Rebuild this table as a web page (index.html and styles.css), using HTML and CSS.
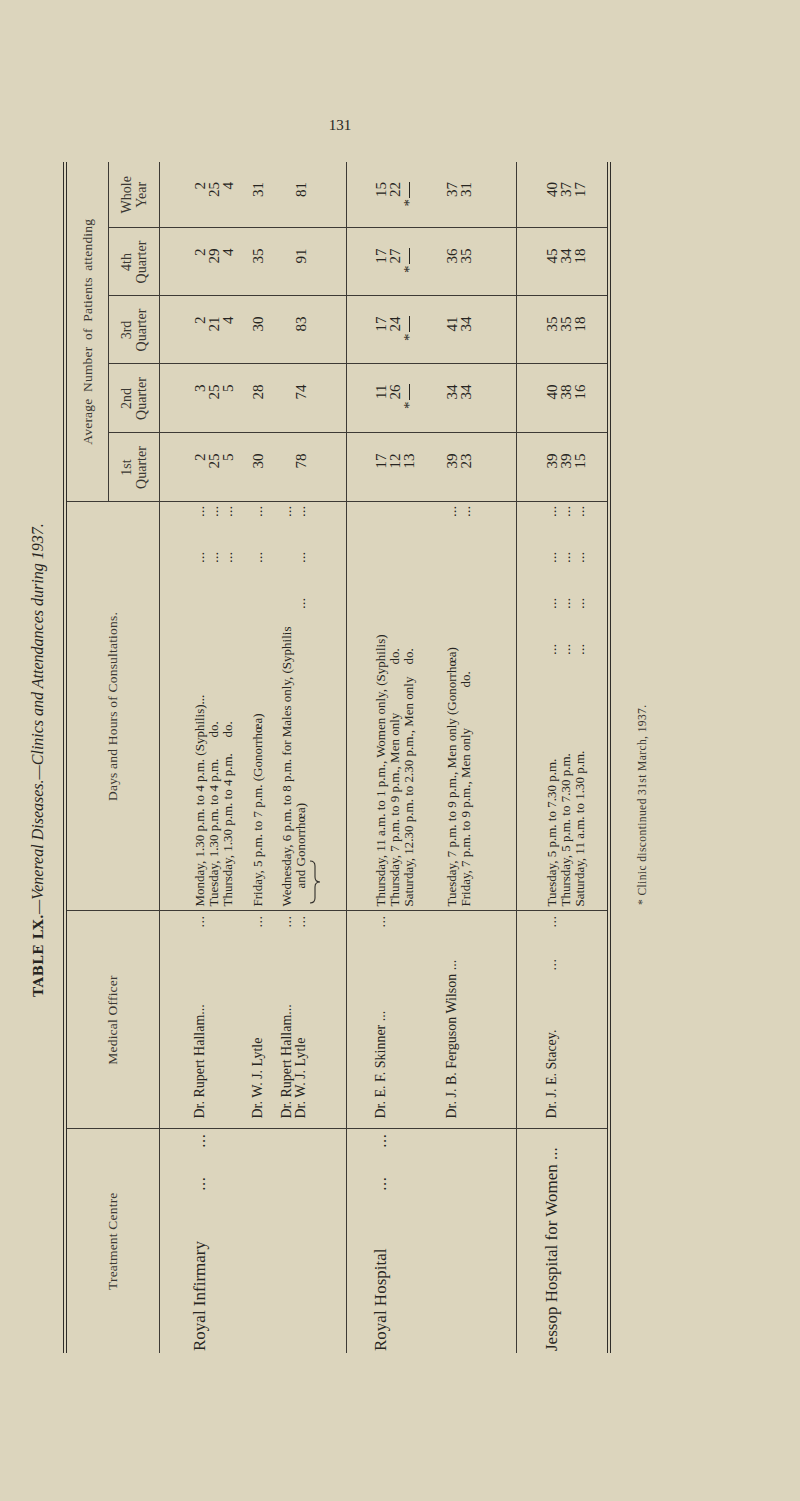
FILE: index.html
```html
<!DOCTYPE html>
<html lang="en">
<head>
<meta charset="utf-8">
<title>Table LX — Venereal Diseases</title>
<link rel="stylesheet" href="styles.css">
</head>
<body>
<div class="page">
  <div class="folio">131</div>
  <div class="rot">
    <div class="sheet">
      <h1 class="title"><span class="tno">TABLE LX.</span><i>—Venereal Diseases.—Clinics and Attendances during 1937.</i></h1>
      <table class="vd">
        <colgroup>
          <col class="c-tc"><col class="c-mo"><col class="c-dh"><col class="c-q1"><col class="c-q2"><col class="c-q3"><col class="c-q4"><col class="c-wy">
        </colgroup>
        <thead>
          <tr class="h1">
            <th rowspan="2" class="hd">Treatment Centre</th>
            <th rowspan="2" class="hd">Medical Officer</th>
            <th rowspan="2" class="hd">Days and Hours of Consultations.</th>
            <th colspan="5" class="hd avg wy">Average Number of Patients attending</th>
          </tr>
          <tr class="h2">
            <th class="sub">1st<br>Quarter</th>
            <th class="sub">2nd<br>Quarter</th>
            <th class="sub">3rd<br>Quarter</th>
            <th class="sub">4th<br>Quarter</th>
            <th class="sub wy">Whole<br>Year</th>
          </tr>
        </thead>
        <tbody>
          <tr class="g1">
            <td class="tc"><div class="cell">
              <div class="blk">
                <div class="ln"><span>Royal Infirmary</span><span class="fill"></span><span class="dt s">...</span><span class="dt s">...</span></div>
              </div>
            </div></td>
            <td class="mo"><div class="cell">
              <div class="blk">
                <div class="ln"><span>Dr. Rupert Hallam...</span><span class="fill"></span><span class="dt s">...</span></div>
                <div class="ln"></div>
                <div class="ln"></div>
              </div>
              <div class="blk m16">
                <div class="ln"><span>Dr. W. J. Lytle</span><span class="fill"></span><span class="dt s">...</span></div>
              </div>
              <div class="blk m15">
                <div class="ln"><span>Dr. Rupert Hallam...</span><span class="fill"></span><span class="dt s">...</span></div>
                <div class="ln"><span>Dr. W. J. Lytle</span><span class="fill"></span><span class="dt s">...</span></div>
              </div>
            </div></td>
            <td class="dh"><div class="cell">
              <div class="blk">
                <div class="ln"><span>Monday, 1.30 p.m. to 4 p.m. (Syphilis)...</span><span class="fill"></span><span class="dt">...</span><span class="dt">...</span></div>
                <div class="ln"><span class="b169">Tuesday, 1.30 p.m. to 4 p.m.</span><span>do.</span><span class="fill"></span><span class="dt">...</span><span class="dt">...</span></div>
                <div class="ln"><span class="b169">Thursday, 1.30 p.m. to 4 p.m.</span><span>do.</span><span class="fill"></span><span class="dt">...</span><span class="dt">...</span></div>
              </div>
              <div class="blk m16">
                <div class="ln"><span>Friday, 5 p.m. to 7 p.m. (Gonorrhœa)</span><span class="fill"></span><span class="dt">...</span><span class="dt">...</span></div>
              </div>
              <div class="blk m15">
                <div class="ln"><span>Wednesday, 6 p.m. to 8 p.m. for Males only, (Syphilis</span><span class="fill"></span><span class="dt">...</span></div>
                <div class="ln"><span class="ind">and Gonorrhœa)</span><span class="fill"></span><span class="dt">...</span><span class="dt">...</span><span class="dt">...</span></div>
                <svg class="brace" width="44" height="12" viewBox="0 0 44 12" aria-hidden="true"><path d="M1 1 Q1 6 6 6 L17 6 Q22 6 22 11 Q22 6 27 6 L38 6 Q43 6 43 1" fill="none" stroke="#2f2d29" stroke-width="1.1"/></svg>
              </div>
            </div></td>
            <td class="num"><div class="cell">
              <div class="blk"><div class="ln">2</div><div class="ln">25</div><div class="ln">5</div></div>
              <div class="blk m16"><div class="ln">30</div></div>
              <div class="blk m15"><div class="ln"></div><div class="ln">78</div></div>
            </div></td>
            <td class="num"><div class="cell">
              <div class="blk"><div class="ln">3</div><div class="ln">25</div><div class="ln">5</div></div>
              <div class="blk m16"><div class="ln">28</div></div>
              <div class="blk m15"><div class="ln"></div><div class="ln">74</div></div>
            </div></td>
            <td class="num"><div class="cell">
              <div class="blk"><div class="ln">2</div><div class="ln">21</div><div class="ln">4</div></div>
              <div class="blk m16"><div class="ln">30</div></div>
              <div class="blk m15"><div class="ln"></div><div class="ln">83</div></div>
            </div></td>
            <td class="num"><div class="cell">
              <div class="blk"><div class="ln">2</div><div class="ln">29</div><div class="ln">4</div></div>
              <div class="blk m16"><div class="ln">35</div></div>
              <div class="blk m15"><div class="ln"></div><div class="ln">91</div></div>
            </div></td>
            <td class="num wy"><div class="cell">
              <div class="blk"><div class="ln">2</div><div class="ln">25</div><div class="ln">4</div></div>
              <div class="blk m16"><div class="ln">31</div></div>
              <div class="blk m15"><div class="ln"></div><div class="ln">81</div></div>
            </div></td>
          </tr>
          <tr class="g2">
            <td class="tc"><div class="cell">
              <div class="blk">
                <div class="ln"><span>Royal Hospital</span><span class="fill"></span><span class="dt s">...</span><span class="dt s">...</span></div>
              </div>
            </div></td>
            <td class="mo"><div class="cell">
              <div class="blk">
                <div class="ln"><span>Dr. E. F. Skinner ...</span><span class="fill"></span><span class="dt s">...</span></div>
                <div class="ln"></div>
                <div class="ln"></div>
              </div>
              <div class="blk m29">
                <div class="ln"><span>Dr. J. B. Ferguson Wilson ...</span></div>
              </div>
            </div></td>
            <td class="dh"><div class="cell">
              <div class="blk">
                <div class="ln"><span>Thursday, 11 a.m. to 1 p.m., Women only, (Syphilis)</span></div>
                <div class="ln"><span class="b242">Thursday, 7 p.m. to 9 p.m., Men only</span><span>do.</span></div>
                <div class="ln"><span class="b242">Saturday, 12.30 p.m. to 2.30 p.m., Men only</span><span>do.</span></div>
              </div>
              <div class="blk m29">
                <div class="ln"><span>Tuesday, 7 p.m. to 9 p.m., Men only (Gonorrhœa)</span><span class="fill"></span><span class="dt">...</span></div>
                <div class="ln"><span class="b219">Friday, 7 p.m. to 9 p.m., Men only</span><span>do.</span><span class="fill"></span><span class="dt">...</span></div>
              </div>
            </div></td>
            <td class="num"><div class="cell">
              <div class="blk"><div class="ln">17</div><div class="ln">12</div><div class="ln">13</div></div>
              <div class="blk m29"><div class="ln">39</div><div class="ln">23</div></div>
            </div></td>
            <td class="num"><div class="cell">
              <div class="blk"><div class="ln">11</div><div class="ln">26</div><div class="ln"><span class="nd">*<i class="dash"></i></span></div></div>
              <div class="blk m29"><div class="ln">34</div><div class="ln">34</div></div>
            </div></td>
            <td class="num"><div class="cell">
              <div class="blk"><div class="ln">17</div><div class="ln">24</div><div class="ln"><span class="nd">*<i class="dash"></i></span></div></div>
              <div class="blk m29"><div class="ln">41</div><div class="ln">34</div></div>
            </div></td>
            <td class="num"><div class="cell">
              <div class="blk"><div class="ln">17</div><div class="ln">27</div><div class="ln"><span class="nd">*<i class="dash"></i></span></div></div>
              <div class="blk m29"><div class="ln">36</div><div class="ln">35</div></div>
            </div></td>
            <td class="num wy"><div class="cell">
              <div class="blk"><div class="ln">15</div><div class="ln">22</div><div class="ln"><span class="nd">*<i class="dash"></i></span></div></div>
              <div class="blk m29"><div class="ln">37</div><div class="ln">31</div></div>
            </div></td>
          </tr>
          <tr class="g3">
            <td class="tc"><div class="cell">
              <div class="blk">
                <div class="ln"><span>Jessop Hospital for Women ...</span></div>
              </div>
            </div></td>
            <td class="mo"><div class="cell">
              <div class="blk">
                <div class="ln"><span>Dr. J. E. Stacey.</span><span class="fill"></span><span class="dt s">...</span><span class="dt s">...</span></div>
              </div>
            </div></td>
            <td class="dh"><div class="cell">
              <div class="blk">
                <div class="ln"><span>Tuesday, 5 p.m. to 7.30 p.m.</span><span class="fill"></span><span class="dt">...</span><span class="dt">...</span><span class="dt">...</span><span class="dt">...</span></div>
                <div class="ln"><span>Thursday, 5 p.m. to 7.30 p.m.</span><span class="fill"></span><span class="dt">...</span><span class="dt">...</span><span class="dt">...</span><span class="dt">...</span></div>
                <div class="ln"><span>Saturday, 11 a.m. to 1.30 p.m.</span><span class="fill"></span><span class="dt">...</span><span class="dt">...</span><span class="dt">...</span><span class="dt">...</span></div>
              </div>
            </div></td>
            <td class="num"><div class="cell">
              <div class="blk"><div class="ln">39</div><div class="ln">39</div><div class="ln">15</div></div>
            </div></td>
            <td class="num"><div class="cell">
              <div class="blk"><div class="ln">40</div><div class="ln">38</div><div class="ln">16</div></div>
            </div></td>
            <td class="num"><div class="cell">
              <div class="blk"><div class="ln">35</div><div class="ln">35</div><div class="ln">18</div></div>
            </div></td>
            <td class="num"><div class="cell">
              <div class="blk"><div class="ln">45</div><div class="ln">34</div><div class="ln">18</div></div>
            </div></td>
            <td class="num wy"><div class="cell">
              <div class="blk"><div class="ln">40</div><div class="ln">37</div><div class="ln">17</div></div>
            </div></td>
          </tr>
        </tbody>
      </table>
      <p class="foot">* Clinic discontinued 31st March, 1937.</p>
    </div>
  </div>
</div>
</body>
</html>
```

FILE: styles.css
```css
html, body {
  margin: 0;
  padding: 0;
  background: #dcd5bd;
}
body {
  width: 800px;
  height: 1501px;
  overflow: hidden;
  font-family: "Liberation Serif", "Times New Roman", serif;
  color: #272521;
}
.page {
  width: 800px;
  height: 1501px;
  overflow: hidden;
  background: #dcd5bd;
}
.folio {
  box-sizing: border-box;
  height: 162px;
  width: 680px;
  padding-top: 116px;
  text-align: center;
  font-size: 15px;
  line-height: 18px;
}
.rot {
  width: 640px;
  height: 1191px;
  margin-left: 25px;
}
.sheet {
  width: 1191px;
  height: 640px;
  transform-origin: 0 0;
  transform: translateY(1191px) rotate(-90deg);
}
.title {
  margin: 0;
  height: 26px;
  line-height: 26px;
  padding-left: 356px;
  font-size: 16px;
  font-weight: normal;
  white-space: nowrap;
}
.title .tno {
  font-family: "DejaVu Serif", "Liberation Serif", serif;
  font-weight: bold;
  font-size: 13.5px;
  letter-spacing: 0.3px;
}
.title i {
  font-style: italic;
}
.vd {
  margin-top: 12px;
  width: 1191px;
  table-layout: fixed;
  border-collapse: collapse;
  border-top: 4px double #2f2d29;
  border-bottom: 4px double #2f2d29;
}
.c-tc { width: 224px; }
.c-mo { width: 218px; }
.c-dh { width: 409px; }
.c-q1, .c-q2 { width: 69px; }
.c-q3, .c-q4 { width: 68px; }
.c-wy { width: 66px; }
.vd th, .vd td {
  padding: 0;
  border-right: 1px solid #3d3a35;
  vertical-align: top;
}
.vd .wy { border-right: none; }
.vd thead th {
  border-bottom: 1px solid #3d3a35;
  vertical-align: middle;
  text-align: center;
  font-weight: normal;
  color: #3a3732;
}
.vd tbody tr { border-bottom: 1px solid #3d3a35; }
.h1 th { height: 41px; }
.h2 th { height: 50px; }
.hd {
  font-size: 13.5px;
  letter-spacing: 0.2px;
}
.avg { word-spacing: 3px; }
.sub {
  font-size: 14px;
  line-height: 15px;
}
.cell {
  box-sizing: border-box;
}
.g1 .cell { height: 186px; padding-top: 33px; }
.g2 .cell { height: 169px; padding-top: 27px; }
.g3 .cell { height: 90px; padding-top: 28px; }
.blk.m16 { margin-top: 16px; }
.blk.m15 { margin-top: 15px; }
.blk.m29 { margin-top: 29px; }
.ln {
  display: flex;
  height: 14px;
  line-height: 14px;
  white-space: nowrap;
}
.ln .fill { flex: 1; }
.dt {
  flex: none;
  width: 46px;
  text-align: right;
  letter-spacing: 0.5px;
}
.dt.s { width: 43px; }
.tc .cell { padding-left: 2px; padding-right: 4px; font-size: 17px; }
.mo .cell { padding-left: 10px; padding-right: 4px; font-size: 14px; }
.dh .cell { padding-left: 4px; padding-right: 3px; font-size: 13px; }
.num .cell { padding-right: 20px; font-size: 15px; }
.num .ln { justify-content: flex-end; }
.b169 { flex: none; width: 169px; }
.b242 { flex: none; width: 242px; }
.b219 { flex: none; width: 219px; }
.ind { padding-left: 18px; }
.brace {
  display: block;
  margin-left: 2px;
  margin-top: 1px;
}
.nd {
  display: inline-flex;
  align-items: center;
}
.dash {
  display: inline-block;
  width: 16px;
  height: 0;
  border-top: 1px solid #272521;
  margin-left: 1px;
}
.foot {
  margin: 24px 0 0 448px;
  font-size: 11.5px;
  line-height: 14px;
  letter-spacing: 0.4px;
  color: #3a3732;
  white-space: nowrap;
}
```
